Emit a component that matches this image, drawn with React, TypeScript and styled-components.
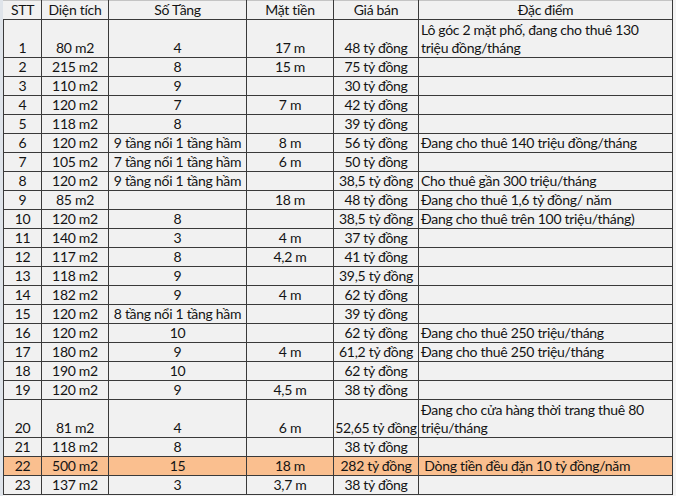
import React from 'react';
import styled, { createGlobalStyle } from 'styled-components';

type Row = {
  stt: number;
  area: string;
  floors?: string;
  front?: string;
  price: string;
  note?: string[];
  tall?: boolean;
  highlight?: boolean;
  marked?: boolean;
};

const rows: Row[] = [
  { stt: 1, area: '80 m2', floors: '4', front: '17 m', price: '48 tỷ đồng', note: ['Lô góc 2 mặt phố, đang cho thuê 130', 'triệu đồng/tháng'], tall: true },
  { stt: 2, area: '215 m2', floors: '8', front: '15 m', price: '75 tỷ đồng' },
  { stt: 3, area: '110 m2', floors: '9', price: '30 tỷ đồng' },
  { stt: 4, area: '120 m2', floors: '7', front: '7 m', price: '42 tỷ đồng' },
  { stt: 5, area: '118 m2', floors: '8', price: '39 tỷ đồng' },
  { stt: 6, area: '120 m2', floors: '9 tầng nổi 1 tầng hầm', front: '8 m', price: '56 tỷ đồng', note: ['Đang cho thuê 140 triệu đồng/tháng'] },
  { stt: 7, area: '105 m2', floors: '7 tầng nổi 1 tầng hầm', front: '6 m', price: '50 tỷ đồng', marked: true },
  { stt: 8, area: '120 m2', floors: '9 tầng nổi 1 tầng hầm', price: '38,5 tỷ đồng', note: ['Cho thuê gần 300 triệu/tháng'] },
  { stt: 9, area: '85 m2', front: '18 m', price: '48 tỷ đồng', note: ['Đang cho thuê 1,6 tỷ đồng/ năm'] },
  { stt: 10, area: '120 m2', floors: '8', price: '38,5 tỷ đồng', note: ['Đang cho thuê trên 100 triệu/tháng)'] },
  { stt: 11, area: '140 m2', floors: '3', front: '4 m', price: '37 tỷ đồng' },
  { stt: 12, area: '117 m2', floors: '8', front: '4,2 m', price: '41 tỷ đồng' },
  { stt: 13, area: '118 m2', floors: '9', price: '39,5 tỷ đồng' },
  { stt: 14, area: '182 m2', floors: '9', front: '4 m', price: '62 tỷ đồng' },
  { stt: 15, area: '120 m2', floors: '8 tầng nổi 1 tầng hầm', price: '39 tỷ đồng' },
  { stt: 16, area: '120 m2', floors: '10', price: '62 tỷ đồng', note: ['Đang cho thuê 250 triệu/tháng'] },
  { stt: 17, area: '180 m2', floors: '9', front: '4 m', price: '61,2 tỷ đồng', note: ['Đang cho thuê 250 triệu/tháng'] },
  { stt: 18, area: '190 m2', floors: '10', price: '62 tỷ đồng' },
  { stt: 19, area: '120 m2', floors: '9', front: '4,5 m', price: '38 tỷ đồng' },
  { stt: 20, area: '81 m2', floors: '4', front: '6 m', price: '52,65 tỷ đồng', note: ['Đang cho cửa hàng thời trang thuê 80', 'triệu/tháng'], tall: true },
  { stt: 21, area: '118 m2', floors: '8', price: '38 tỷ đồng' },
  { stt: 22, area: '500 m2', floors: '15', front: '18 m', price: '282 tỷ đồng', note: ['\u00a0Dòng tiền đều đặn 10 tỷ đồng/năm'], highlight: true },
  { stt: 23, area: '137 m2', floors: '3', front: '3,7 m', price: '38 tỷ đồng' },
];

const columns = [
  { title: 'STT', width: 38 },
  { title: 'Diện tích', width: 67 },
  { title: 'Số Tầng', width: 138 },
  { title: 'Mặt tiền', width: 87 },
  { title: 'Giá bán', width: 85 },
  { title: 'Đặc điểm', width: 254 },
];

const GlobalStyle = createGlobalStyle`
  html, body {
    margin: 0;
    padding: 0;
    background: #f4f4f4;
  }
  body {
    font-family: Lato, 'Open Sans', sans-serif;
    color: #141414;
  }
`;

const Sheet = styled.div`
  width: 676px;
  height: 496px;
  overflow: hidden;
  padding-left: 3px;
  box-sizing: border-box;
  background: linear-gradient(to right, #dfe4ea 0 3px, #f4f4f4 3px);
`;

const Table = styled.table`
  border-collapse: collapse;
  table-layout: fixed;
  width: 669px;
  font-size: 14px;
  letter-spacing: -0.3px;
  line-height: 18px;
  white-space: nowrap;
`;

const HeadCell = styled.th`
  height: 16px;
  padding: 0;
  font-weight: 400;
  text-align: center;
  vertical-align: bottom;
  background: #f1f1f1;
  border: 1px solid #3a3a3a;
  border-top: 1px solid #c4c4c4;
  border-left-color: #f1f1f1;
`;

const BodyRow = styled.tr<{ $tall?: boolean; $highlight?: boolean }>`
  height: ${(p) => (p.$tall ? 38 : 18)}px;
  background: ${(p) => (p.$highlight ? '#fabf8f' : '#f1f1f1')};
`;

const Cell = styled.td<{ $left?: boolean; $marked?: boolean }>`
  height: inherit;
  box-sizing: border-box;
  padding: ${(p) => (p.$left ? '0 0 0 2px' : '0')};
  text-align: ${(p) => (p.$left ? 'left' : 'center')};
  vertical-align: bottom;
  border: 1px solid #3a3a3a;
  overflow: hidden;
  box-shadow: ${(p) => (p.$marked ? '-3px 0 0 #f2c14e' : 'none')};
`;

export default function App() {
  return (
    <>
      <GlobalStyle />
      <Sheet>
        <Table>
          <colgroup>
            {columns.map((c) => (
              <col key={c.title} style={{ width: c.width }} />
            ))}
          </colgroup>
          <thead>
            <tr>
              {columns.map((c) => (
                <HeadCell key={c.title}>{c.title}</HeadCell>
              ))}
            </tr>
          </thead>
          <tbody>
            {rows.map((r) => (
              <BodyRow key={r.stt} $tall={r.tall} $highlight={r.highlight}>
                <Cell $marked={r.marked}>{r.stt}</Cell>
                <Cell>{r.area}</Cell>
                <Cell>{r.floors}</Cell>
                <Cell>{r.front}</Cell>
                <Cell>{r.price}</Cell>
                <Cell $left>
                  {r.note?.map((line, i) => (
                    <React.Fragment key={i}>
                      {i > 0 && <br />}
                      {line}
                    </React.Fragment>
                  ))}
                </Cell>
              </BodyRow>
            ))}
          </tbody>
        </Table>
      </Sheet>
    </>
  );
}
